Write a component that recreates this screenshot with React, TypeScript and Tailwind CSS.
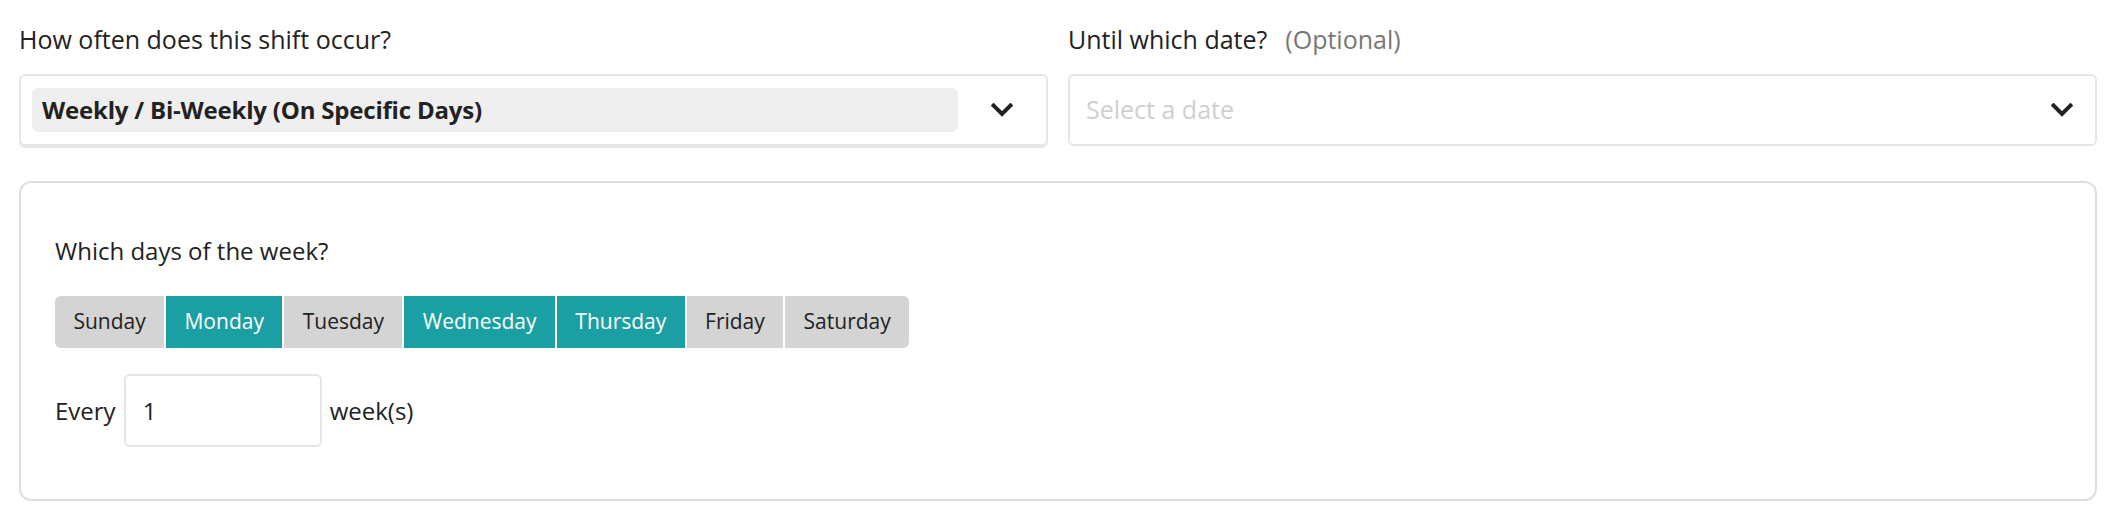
import { useState } from 'react';

const DAYS = ['Sunday', 'Monday', 'Tuesday', 'Wednesday', 'Thursday', 'Friday', 'Saturday'];

function Chevron() {
  return (
    <svg width="22" height="14" viewBox="0 0 22 14" fill="none">
      <path d="M2.5 2.5 L11 11 L19.5 2.5" stroke="#222" strokeWidth="4" strokeLinecap="square" strokeLinejoin="miter" />
    </svg>
  );
}

export default function App() {
  const [selected, setSelected] = useState<string[]>(['Monday', 'Wednesday', 'Thursday']);
  const [every, setEvery] = useState('1');

  const toggle = (day: string) =>
    setSelected((s) => (s.includes(day) ? s.filter((d) => d !== day) : [...s, day]));

  return (
    <div className="w-[2118px] h-[524px] bg-white font-['Open_Sans',sans-serif] text-[#222] pl-[19px] pr-[21px] pt-[21px]">
      <div className="grid grid-cols-2 gap-[20px]">
        <div>
          <div className="text-[25px] leading-[36px] mb-[17px]">How often does this shift occur?</div>
          <div className="h-[72px] border-2 border-[#e6e6e6] rounded-[6px] shadow-[0_2px_0_#e6e6e6] flex items-center pl-[11px]">
            <div className="flex-1 h-[44px] bg-[#efefef] rounded-[6px] flex items-center pl-[10px] text-[24px] font-bold tracking-[-0.2px]">
              Weekly / Bi-Weekly (On Specific Days)
            </div>
            <div className="w-[88px] flex justify-center">
              <Chevron />
            </div>
          </div>
        </div>
        <div>
          <div className="text-[25px] leading-[36px] mb-[17px]">
            Until which date?
            <span className="ml-[18px] text-[#777]">(Optional)</span>
          </div>
          <div className="h-[72px] border-2 border-[#e6e6e6] rounded-[6px] flex items-stretch">
            <div className="flex-1 ml-[16px] flex items-center shadow-[0_2px_0_#e6e6e6] text-[25px] text-[#cfcfcf]">
              Select a date
            </div>
            <div className="w-[62px] flex items-center justify-center pr-[4px]">
              <Chevron />
            </div>
          </div>
        </div>
      </div>

      <div className="mt-[35px] h-[320px] border-2 border-[#dedede] rounded-[12px] pl-[34px] pt-[50px]">
        <div className="text-[24px] leading-[36px]">Which days of the week?</div>
        <div className="mt-[27px] flex gap-[2px]">
          {DAYS.map((day, i) => {
            const on = selected.includes(day);
            return (
              <button
                key={day}
                onClick={() => toggle(day)}
                className={
                  'h-[52px] px-[18.4px] text-[21px] ' +
                  (on ? 'bg-[#1aa0a3] text-white ' : 'bg-[#d4d4d4] text-[#222] ') +
                  (i === 0 ? 'rounded-l-[6px] ' : '') +
                  (i === DAYS.length - 1 ? 'rounded-r-[6px]' : '')
                }
              >
                {day}
              </button>
            );
          })}
        </div>
        <div className="mt-[26px] flex items-center gap-[8px] text-[24px]">
          <span>Every</span>
          <input
            value={every}
            onChange={(e) => setEvery(e.target.value)}
            className="w-[198px] h-[73px] border-2 border-[#e6e6e6] rounded-[6px] pl-[17px] outline-none"
          />
          <span>week(s)</span>
        </div>
      </div>
    </div>
  );
}
